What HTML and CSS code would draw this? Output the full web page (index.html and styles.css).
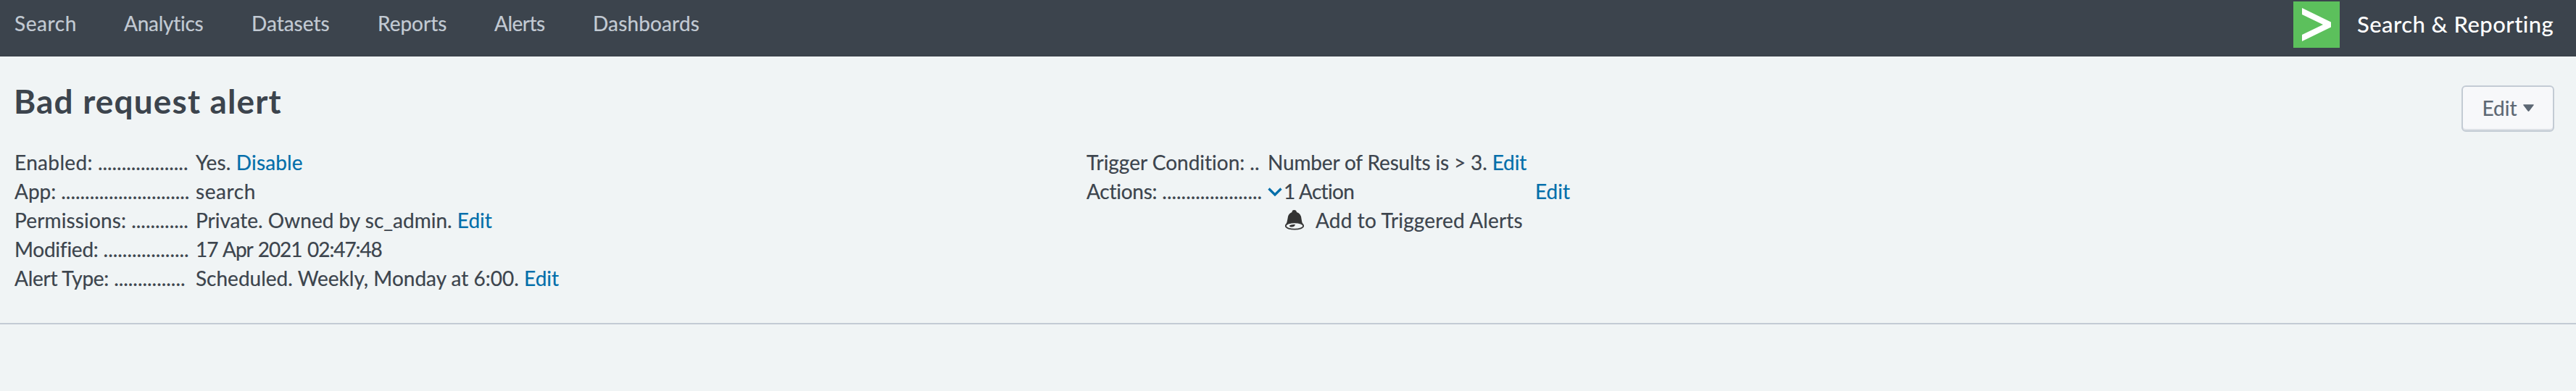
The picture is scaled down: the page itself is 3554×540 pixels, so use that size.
FILE: index.html
```html
<!DOCTYPE html>
<html lang="en">
<head>
<meta charset="utf-8">
<title>Bad request alert</title>
<link rel="stylesheet" href="styles.css">
</head>
<body>
<header class="appbar">
  <nav class="nav">
    <a class="wide-2">Search</a>
    <a class="tight">Analytics</a>
    <a>Datasets</a>
    <a>Reports</a>
    <a class="tight-2">Alerts</a>
    <a class="wide-0">Dashboards</a>
  </nav>
  <div class="app">
    <svg class="app-icon" viewBox="0 0 64 64"><rect width="64" height="64" fill="#5cc05c"/><path d="M12 9v9l29 14-29 14v9l40-19.500v-7z" fill="#fff"/></svg>
    <span class="app-name">Search &amp; Reporting</span>
  </div>
</header>
<section class="heading">
  <h1 class="title">Bad request alert</h1>
  <button class="button">Edit<svg class="caret" viewBox="0 0 14 10"><path d="M1 0h12q1.500 0 .5 1.300L8 8.500q-1 1.200-2 0L.5 1.300Q-.5 0 1 0z" fill="#5c6773"/></svg></button>
</section>
<main class="details">
  <dl class="list">
    <dt><span class="wide-1">Enabled:</span><i>...................</i></dt>
    <dd class="wide-0">Yes. <a>Disable</a></dd>
    <dt><span>App:</span><i>...........................</i></dt>
    <dd class="wide-2">search</dd>
    <dt><span class="wide-0">Permissions:</span><i>............</i></dt>
    <dd>Private. Owned by sc_admin. <a>Edit</a></dd>
    <dt><span class="tight">Modified:</span><i>..................</i></dt>
    <dd class="digits">17 Apr 2021 02:47:48</dd>
    <dt><span class="tight">Alert Type:</span><i>...............</i></dt>
    <dd>Scheduled. Weekly, Monday at 6:00. <a>Edit</a></dd>
  </dl>
  <dl class="list">
    <dt><span>Trigger Condition:</span><i>..</i></dt>
    <dd class="tight-1">Number of Results is &gt; 3. <a>Edit</a></dd>
    <dt><span class="tight">Actions:</span><i>.....................</i></dt>
    <dd class="action">
      <svg class="chevron" viewBox="0 0 20 14"><path d="M1.500 1.500l8.500 8.500 8.500-8.500" fill="none" stroke="#006eaa" stroke-width="3.200"/></svg>
      <span class="count">1 Action</span>
      <a>Edit</a>
    </dd>
    <dd class="triggered">
      <svg class="bell" viewBox="0 0 28 30"><path d="M10.500 4q0-3 3-3t3.500 3q6 2 6.500 9 .2 5 3 9H1.500q2.500-4 3-9 .5-7 6-9z" fill="#333"/><ellipse cx="14" cy="23" rx="12.200" ry="4.700" fill="#f0f4f5" stroke="#3a3a3a" stroke-width="1.800"/><path d="M7 22.500q2-2 8-1.500-1 3.500-5 3.500-3 0-3-2z" fill="#333"/></svg>
      <span class="wide-0">Add to Triggered Alerts</span>
    </dd>
  </dl>
</main>
</body>
</html>
```
FILE: styles.css
```css
* { box-sizing: border-box; }
body {
  margin: 0;
  background: #f0f4f5;
  color: #3c444d;
  font: 28px/40px Lato, "Open Sans", sans-serif;
  font-variant-ligatures: none;
  -webkit-text-stroke: 0.2px currentColor;
}
a { color: #006eaa; }

.appbar {
  display: flex;
  justify-content: space-between;
  height: 78px;
  padding: 0 31px 0 20px;
  background: #3c444d;
  border-bottom: 1px solid #363d45;
}
.nav {
  display: grid;
  grid-template-columns: 151px 176px 174px 161px 136px auto;
  padding-top: 12px;
}
.nav a { color: #c3cbd4; }
.app { display: flex; gap: 24px; }
.app-icon { width: 64px; height: 64px; margin-top: 2px; }
.app-name {
  width: 271px;
  padding-top: 13px;
  color: #fff;
  font-size: 31px;
  font-weight: 500;
  letter-spacing: 0.45px;
  white-space: nowrap;
  -webkit-text-stroke: 0;
}

.heading {
  display: flex;
  justify-content: space-between;
  height: 126px;
  padding: 32px 30px 0 19px;
}
.title {
  margin: 0;
  font-size: 46px;
  font-weight: 700;
  line-height: 60px;
  letter-spacing: 1.15px;
  -webkit-text-stroke: 0;
}
.button {
  display: flex;
  align-items: center;
  justify-content: center;
  gap: 8px;
  width: 128px;
  height: 64px;
  margin-top: 8px;
  padding: 0 0 2px;
  border: 2px solid #c3cbd4;
  border-radius: 6px;
  background: #f7f8fa;
  box-shadow: inset 0 -2px 0 #dde1e6;
  color: #5c6773;
  font: inherit;
}
.caret { flex: none; width: 15px; height: 11px; }

.details {
  display: grid;
  grid-template-columns: 1479px 1fr;
  height: 244px;
  padding-left: 20px;
  border-bottom: 2px solid #c3cbd4;
}
.list {
  display: grid;
  grid-template-columns: 240px auto;
  grid-auto-rows: 40px;
  column-gap: 10px;
  justify-content: start;
  margin: 0;
}
dt {
  display: flex;
  gap: 7px;
  white-space: nowrap;
}
dt i { font-style: normal; letter-spacing: -0.05px; }
dd { margin: 0; white-space: nowrap; }
.action { display: flex; }
.chevron { width: 20px; height: 14px; margin-top: 15px; }
.count {
  width: 349px;
  padding-left: 2px;
  letter-spacing: -0.7px;
}
.triggered {
  grid-column: 2;
  display: flex;
  gap: 15px;
  padding-left: 23px;
}
.bell { width: 28px; height: 30px; margin-top: 5px; }

.wide-0 { letter-spacing: 0.15px; }
.wide-1 { letter-spacing: 0.35px; }
.wide-2 { letter-spacing: 0.6px; }
.tight-1 { letter-spacing: -0.15px; }
.tight { letter-spacing: -0.25px; }
.tight-2 { letter-spacing: -0.5px; }
.digits { letter-spacing: -1.1px; word-spacing: 1.7px; }
```
